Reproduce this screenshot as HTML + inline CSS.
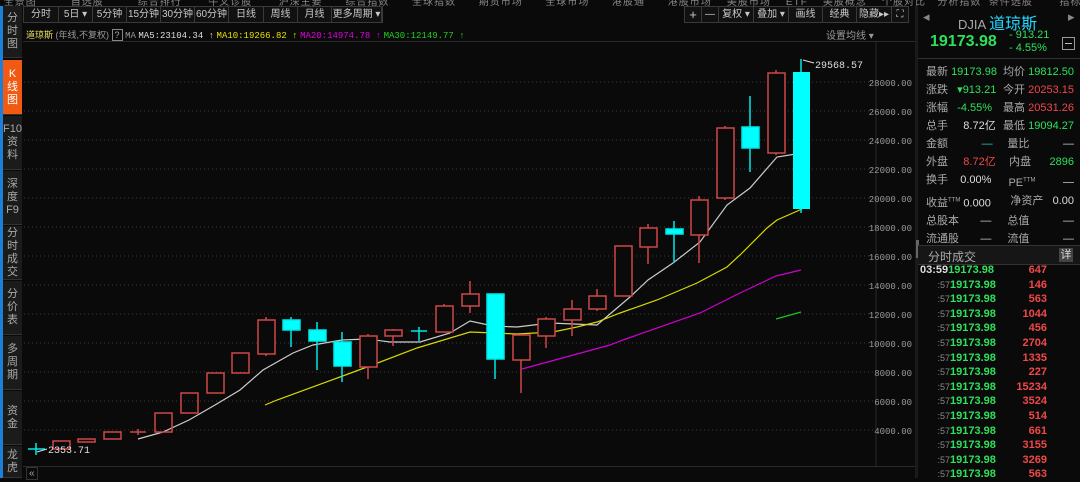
<!DOCTYPE html>
<html><head><meta charset="utf-8"><style>
*{margin:0;padding:0;box-sizing:border-box}
body{width:1080px;height:478px;background:#0a0a0a;overflow:hidden;position:relative;font-family:"Liberation Sans","Noto Sans CJK SC",sans-serif;color:#c8c8c8}
.abs{position:absolute}
.tb{position:absolute;top:6px;height:17px;border:1px solid #3a3a3a;display:flex;background:#111}
.tb div{border-right:1px solid #3a3a3a;font-size:10px;line-height:15px;text-align:center;color:#c8c8c8;white-space:nowrap;overflow:hidden}
.side{position:absolute;left:3px;width:19px;background:#1b1b1b;border-bottom:1px solid #333;font-size:11px;color:#aaa;text-align:center;line-height:13px;display:flex;flex-direction:column;justify-content:center}
.q{position:absolute;font-size:11px;white-space:nowrap}
.g{color:#2ee05a}.r{color:#f04848}.w{color:#ddd}.lb{color:#aaa}
.row{display:flex;justify-content:space-between}
.t{color:#888;font-weight:normal;font-size:9px;display:inline-block;width:30px;text-align:right}
.v{padding-right:28px}
</style></head><body>
<div class="abs" style="left:0;top:0;width:1080px;height:6px;overflow:hidden">
<div style="font-size:10px;color:#888;margin-top:-7px;white-space:nowrap;letter-spacing:1px">&nbsp;全景图&nbsp;&nbsp;&nbsp;&nbsp;&nbsp;&nbsp;&nbsp;&nbsp;&nbsp;自选股&nbsp;&nbsp;&nbsp;&nbsp;&nbsp;&nbsp;&nbsp;&nbsp;&nbsp;综合排行&nbsp;&nbsp;&nbsp;&nbsp;&nbsp;&nbsp;&nbsp;牛叉诊股&nbsp;&nbsp;&nbsp;&nbsp;&nbsp;&nbsp;&nbsp;沪深主要&nbsp;&nbsp;&nbsp;&nbsp;&nbsp;&nbsp;综合指数&nbsp;&nbsp;&nbsp;&nbsp;&nbsp;&nbsp;全球指数&nbsp;&nbsp;&nbsp;&nbsp;&nbsp;&nbsp;期货市场&nbsp;&nbsp;&nbsp;&nbsp;&nbsp;&nbsp;全球市场&nbsp;&nbsp;&nbsp;&nbsp;&nbsp;&nbsp;港股通&nbsp;&nbsp;&nbsp;&nbsp;&nbsp;&nbsp;港股市场&nbsp;&nbsp;&nbsp;&nbsp;美股市场&nbsp;&nbsp;&nbsp;&nbsp;ETF&nbsp;&nbsp;&nbsp;&nbsp;美股概念&nbsp;&nbsp;&nbsp;&nbsp;个股对比&nbsp;&nbsp;&nbsp;分析指数&nbsp;&nbsp;条件选股&nbsp;&nbsp;&nbsp;&nbsp;&nbsp;&nbsp;&nbsp;指标选股&nbsp;&nbsp;&nbsp;&nbsp;&nbsp;&nbsp;&nbsp;&nbsp;打开分析&nbsp;&nbsp;退出</div></div>
<div class="abs" style="left:0;top:6px;width:3px;height:472px;background:#1e7fd6"></div>
<div class="tb" style="left:23px"><div style="width:35px">分时</div><div style="width:34px">5日 ▾</div><div style="width:34px">5分钟</div><div style="width:34px">15分钟</div><div style="width:34px">30分钟</div><div style="width:34px">60分钟</div><div style="width:35px">日线</div><div style="width:34px">周线</div><div style="width:34px">月线</div><div style="width:50px">更多周期 ▾</div></div>
<div class="tb" style="left:684px"><div style="width:17px;font-size:13px">+</div><div style="width:17px">—</div><div style="width:35px">复权 ▾</div><div style="width:35px">叠加 ▾</div><div style="width:34px">画线</div><div style="width:34px">经典</div><div style="width:35px">隐藏▸▸</div><div style="width:16px;border:0">⛶</div></div>
<div class="side" style="top:6px;height:52px">分<br>时<br>图</div>
<div class="side" style="top:60px;height:55px;background:#f05a12;color:#fff">K<br>线<br>图</div>
<div class="side" style="top:116px;height:54px">F10<br>资<br>料</div>
<div class="side" style="top:171px;height:54px">深<br>度<br>F9</div>
<div class="side" style="top:226px;height:54px">分<br>时<br>成<br>交</div>
<div class="side" style="top:281px;height:54px">分<br>价<br>表</div>
<div class="side" style="top:336px;height:54px">多<br>周<br>期</div>
<div class="side" style="top:391px;height:54px">资<br>金</div>
<div class="side" style="top:446px;height:32px">龙<br>虎</div>
<div class="q" style="left:26px;top:28px;font-size:9px"><span style="color:#e8e060">道琼斯</span> <span style="color:#999">(年线,不复权)</span> <span style="border:1px solid #888;padding:0 2px;color:#aaa">?</span> <span style="color:#999;font-family:Liberation Mono,monospace">MA</span> <span class="w" style="font-family:Liberation Mono,monospace">MA5:23104.34 ↑</span> <span style="color:#e8e000;font-family:Liberation Mono,monospace">MA10:19266.82 ↑</span> <span style="color:#e000e0;font-family:Liberation Mono,monospace">MA20:14974.78 ↑</span> <span style="color:#20d020;font-family:Liberation Mono,monospace">MA30:12149.77 ↑</span></div>
<div class="q" style="left:826px;top:27px;font-size:10px;color:#999">设置均线 ▾</div>
<div class="abs" style="left:23px;top:41px;width:895px;height:1px;background:#2a2a2a"></div>
<div class="abs" style="left:915px;top:6px;width:3px;height:472px;background:#1a1a1a"></div>
<div class="abs" style="left:916px;top:240px;width:3px;height:18px;background:#666"></div>
<div class="abs" style="left:23px;top:466px;width:892px;height:1px;background:#2a2a2a"></div>
<div class="q" style="left:26px;top:467px;font-size:10px;color:#aaa;border:1px solid #333;padding:0 2px">«</div>
<svg class="abs" style="left:0;top:0" width="915" height="478">
<g stroke="#3a3a3a" stroke-dasharray="1 3" stroke-width="1">
<line x1="24" x2="873" y1="82" y2="82"/><line x1="24" x2="873" y1="111" y2="111"/><line x1="24" x2="873" y1="140" y2="140"/><line x1="24" x2="873" y1="169" y2="169"/><line x1="24" x2="873" y1="198" y2="198"/><line x1="24" x2="873" y1="227" y2="227"/><line x1="24" x2="873" y1="256" y2="256"/><line x1="24" x2="873" y1="285" y2="285"/><line x1="24" x2="873" y1="314" y2="314"/><line x1="24" x2="873" y1="343" y2="343"/><line x1="24" x2="873" y1="372" y2="372"/><line x1="24" x2="873" y1="401" y2="401"/><line x1="24" x2="873" y1="430" y2="430"/>
</g>
<line x1="876" x2="876" y1="42" y2="466" stroke="#2a2a2a"/>
<g font-family="Liberation Mono,monospace" font-size="9" fill="#999" text-anchor="end">
<text x="912" y="86">28000.00</text><text x="912" y="115">26000.00</text><text x="912" y="144">24000.00</text><text x="912" y="173">22000.00</text><text x="912" y="202">20000.00</text><text x="912" y="231">18000.00</text><text x="912" y="260">16000.00</text><text x="912" y="289">14000.00</text><text x="912" y="318">12000.00</text><text x="912" y="347">10000.00</text><text x="912" y="376">8000.00</text><text x="912" y="405">6000.00</text><text x="912" y="434">4000.00</text>
</g>
<g fill="none" stroke-width="1.2">
<polyline stroke="#ccc" points="138,439 163,432 189,420 215,405 240,390 263,370 293,353 313,345 342,340 367,339 390,342 420,342 450,333 470,321 493,326 517,327 550,323 597,325 630,297 648,280 673,263 700,242 727,205 750,188 777,157 802,153"/>
<polyline stroke="#d8d800" points="265,405 277,400 340,377 367,367 417,348 470,332 517,334 553,332 577,327 597,322 620,313 657,300 697,283 727,267 740,255 767,228 777,220 802,209"/>
<polyline stroke="#d000d0" points="522,369 610,345 623,340 700,313 740,293 776,276 801,270"/>
<polyline stroke="#20c020" points="776,319 801,312"/>
</g>
<g stroke="#d04848" fill="none" stroke-width="1.5">
<rect x="53" y="441" width="17" height="8"/><rect x="78" y="439" width="17" height="3"/><rect x="104" y="432" width="17" height="7"/><line x1="130" x2="146" y1="432" y2="432"/><line x1="138" x2="138" y1="429" y2="435"/>
<rect x="155" y="413" width="17" height="19"/><rect x="181" y="393" width="17" height="20"/><rect x="207" y="373" width="17" height="20"/><rect x="232" y="353" width="17" height="20"/>
<line x1="266" x2="266" y1="317" y2="356"/><rect x="258" y="320" width="17" height="34" fill="#0a0a0a"/>
<line x1="368" x2="368" y1="334" y2="379"/><rect x="360" y="336" width="17" height="31" fill="#0a0a0a"/>
<line x1="393" x2="393" y1="329" y2="346"/><rect x="385" y="330" width="17" height="6" fill="#0a0a0a"/>
<line x1="444" x2="444" y1="304" y2="332"/><rect x="436" y="306" width="17" height="26" fill="#0a0a0a"/>
<line x1="470" x2="470" y1="281" y2="313"/><rect x="462" y="294" width="17" height="12" fill="#0a0a0a"/>
<line x1="521" x2="521" y1="334" y2="393"/><rect x="513" y="335" width="17" height="25" fill="#0a0a0a"/>
<line x1="546" x2="546" y1="317" y2="348"/><rect x="538" y="319" width="17" height="17" fill="#0a0a0a"/>
<line x1="572" x2="572" y1="300" y2="336"/><rect x="564" y="309" width="17" height="11" fill="#0a0a0a"/>
<line x1="597" x2="597" y1="289" y2="311"/><rect x="589" y="296" width="17" height="13" fill="#0a0a0a"/>
<rect x="615" y="246" width="17" height="50" fill="#0a0a0a"/>
<line x1="648" x2="648" y1="224" y2="264"/><rect x="640" y="228" width="17" height="19" fill="#0a0a0a"/>
<line x1="699" x2="699" y1="196" y2="263"/><rect x="691" y="200" width="17" height="35" fill="#0a0a0a"/>
<line x1="725" x2="725" y1="126" y2="200"/><rect x="717" y="128" width="17" height="70" fill="#0a0a0a"/>
<line x1="776" x2="776" y1="70" y2="155"/><rect x="768" y="73" width="17" height="80" fill="#0a0a0a"/>
</g>
<g stroke="#00e8e8" stroke-width="1.5" fill="#00ffff">
<line x1="28" x2="45" y1="449" y2="449"/><line x1="36" x2="36" y1="443" y2="455"/>
<line x1="291" x2="291" y1="317" y2="347"/><rect x="283" y="320" width="17" height="10"/>
<line x1="317" x2="317" y1="322" y2="370"/><rect x="309" y="330" width="17" height="11"/>
<line x1="342" x2="342" y1="332" y2="382"/><rect x="334" y="342" width="17" height="24"/>
<line x1="411" x2="427" y1="331" y2="331"/><line x1="419" x2="419" y1="327" y2="341"/>
<line x1="495" x2="495" y1="294" y2="379"/><rect x="487" y="294" width="17" height="65"/>
<line x1="674" x2="674" y1="221" y2="263"/><rect x="666" y="229" width="17" height="5"/>
<line x1="750" x2="750" y1="96" y2="172"/><rect x="742" y="127" width="17" height="21"/>
<line x1="801" x2="801" y1="59" y2="213"/><rect x="793" y="72" width="17" height="137" stroke="none"/>
</g>
<g font-family="Liberation Mono,monospace" font-size="10" fill="#ddd">
<path d="M803,60 L814,63" stroke="#ddd"/><text x="815" y="68">29568.57</text>
<path d="M37,452 L47,449" stroke="#ddd"/><text x="48" y="453">2353.71</text>
</g>
</svg>
<div class="q" style="left:923px;top:9px;font-size:13px;color:#888">◂</div>
<div class="q" style="left:1068px;top:9px;font-size:13px;color:#888">▸</div>
<div class="q" style="left:958px;top:10px;font-size:13px;color:#aaa">DJIA <span style="color:#20d8ff;font-size:16px">道琼斯</span></div>
<div class="q g" style="left:930px;top:33px;font-size:16px;font-weight:bold">19173.98</div>
<div class="q g" style="left:1009px;top:29px;font-size:11px">- 913.21</div>
<div class="q g" style="left:1009px;top:42px;font-size:11px">- 4.55%</div>
<div class="abs" style="left:1062px;top:37px;width:13px;height:13px;border:1px solid #999"><div style="margin:5px 2px;height:1px;background:#bbb"></div></div>
<div class="abs" style="left:918px;top:58px;width:162px;height:1px;background:#333"></div>
<div style="position:absolute;left:926px;top:63px;width:148px;font-size:11px;line-height:18px">
<div class="row"><span><span class="lb">最新</span> <span class="g">19173.98</span></span><span><span class="lb">均价</span> <span class="g">19812.50</span></span></div>
<div class="row"><span><span class="lb">涨跌</span> &nbsp;&nbsp;<span class="g">▾913.21</span></span><span><span class="lb">今开</span> <span class="r">20253.15</span></span></div>
<div class="row"><span><span class="lb">涨幅</span> &nbsp;&nbsp;<span class="g">-4.55%</span></span><span><span class="lb">最高</span> <span class="r">20531.26</span></span></div>
<div class="row"><span><span class="lb">总手</span> &nbsp;&nbsp;&nbsp;&nbsp;<span class="w">8.72亿</span></span><span><span class="lb">最低</span> <span class="g">19094.27</span></span></div>
<div class="row"><span><span class="lb">金额</span> &nbsp;&nbsp;&nbsp;&nbsp;&nbsp;&nbsp;&nbsp;&nbsp;&nbsp;&nbsp;<span style="color:#20c8d0">—</span></span><span><span class="lb">量比</span> &nbsp;&nbsp;&nbsp;&nbsp;&nbsp;&nbsp;&nbsp;&nbsp;&nbsp;&nbsp;—</span></div>
<div class="row"><span><span class="lb">外盘</span> &nbsp;&nbsp;&nbsp;&nbsp;<span class="r">8.72亿</span></span><span><span class="lb">内盘</span> &nbsp;&nbsp;&nbsp;&nbsp;&nbsp;<span class="g">2896</span></span></div>
<div class="row"><span><span class="lb">换手</span> &nbsp;&nbsp;&nbsp;<span class="w">0.00%</span></span><span><span class="lb">PE<sup style="font-size:6px">TTM</sup></span> &nbsp;&nbsp;&nbsp;&nbsp;&nbsp;&nbsp;&nbsp;&nbsp;—</span></div>
<div class="row"><span><span class="lb">收益<sup style="font-size:6px">TTM</sup></span> <span class="w">0.000</span></span><span><span class="lb">净资产</span> &nbsp;&nbsp;<span class="w">0.00</span></span></div>
<div class="row"><span><span class="lb">总股本</span> &nbsp;&nbsp;&nbsp;&nbsp;&nbsp;&nbsp;—</span><span><span class="lb">总值</span> &nbsp;&nbsp;&nbsp;&nbsp;&nbsp;&nbsp;&nbsp;&nbsp;&nbsp;&nbsp;—</span></div>
<div class="row"><span><span class="lb">流通股</span> &nbsp;&nbsp;&nbsp;&nbsp;&nbsp;&nbsp;—</span><span><span class="lb">流值</span> &nbsp;&nbsp;&nbsp;&nbsp;&nbsp;&nbsp;&nbsp;&nbsp;&nbsp;&nbsp;—</span></div>
</div>
<div class="abs" style="left:918px;top:245px;width:162px;height:20px;background:#161616;border-top:1px solid #333;border-bottom:1px solid #333"></div>
<div class="q lb" style="left:928px;top:248px;font-size:12px">分时成交</div>
<div class="abs" style="left:1059px;top:248px;width:14px;height:14px;background:#444;color:#ddd;font-size:11px;text-align:center;line-height:14px">详</div>
<div style="position:absolute;left:920px;top:263px;width:155px;font-size:11px;line-height:14.6px;font-weight:bold">
<div class="row"><span><span class="w" style="font-size:11px">03:59</span><span class="g">19173.98</span></span><span class="r v">647</span></div>
<div class="row"><span><span class="t">:57</span><span class="g">19173.98</span></span><span class="r v">146</span></div>
<div class="row"><span><span class="t">:57</span><span class="g">19173.98</span></span><span class="r v">563</span></div>
<div class="row"><span><span class="t">:57</span><span class="g">19173.98</span></span><span class="r v">1044</span></div>
<div class="row"><span><span class="t">:57</span><span class="g">19173.98</span></span><span class="r v">456</span></div>
<div class="row"><span><span class="t">:57</span><span class="g">19173.98</span></span><span class="r v">2704</span></div>
<div class="row"><span><span class="t">:57</span><span class="g">19173.98</span></span><span class="r v">1335</span></div>
<div class="row"><span><span class="t">:57</span><span class="g">19173.98</span></span><span class="r v">227</span></div>
<div class="row"><span><span class="t">:57</span><span class="g">19173.98</span></span><span class="r v">15234</span></div>
<div class="row"><span><span class="t">:57</span><span class="g">19173.98</span></span><span class="r v">3524</span></div>
<div class="row"><span><span class="t">:57</span><span class="g">19173.98</span></span><span class="r v">514</span></div>
<div class="row"><span><span class="t">:57</span><span class="g">19173.98</span></span><span class="r v">661</span></div>
<div class="row"><span><span class="t">:57</span><span class="g">19173.98</span></span><span class="r v">3155</span></div>
<div class="row"><span><span class="t">:57</span><span class="g">19173.98</span></span><span class="r v">3269</span></div>
<div class="row"><span><span class="t">:57</span><span class="g">19173.98</span></span><span class="r v">563</span></div>
</div>
</body></html>
